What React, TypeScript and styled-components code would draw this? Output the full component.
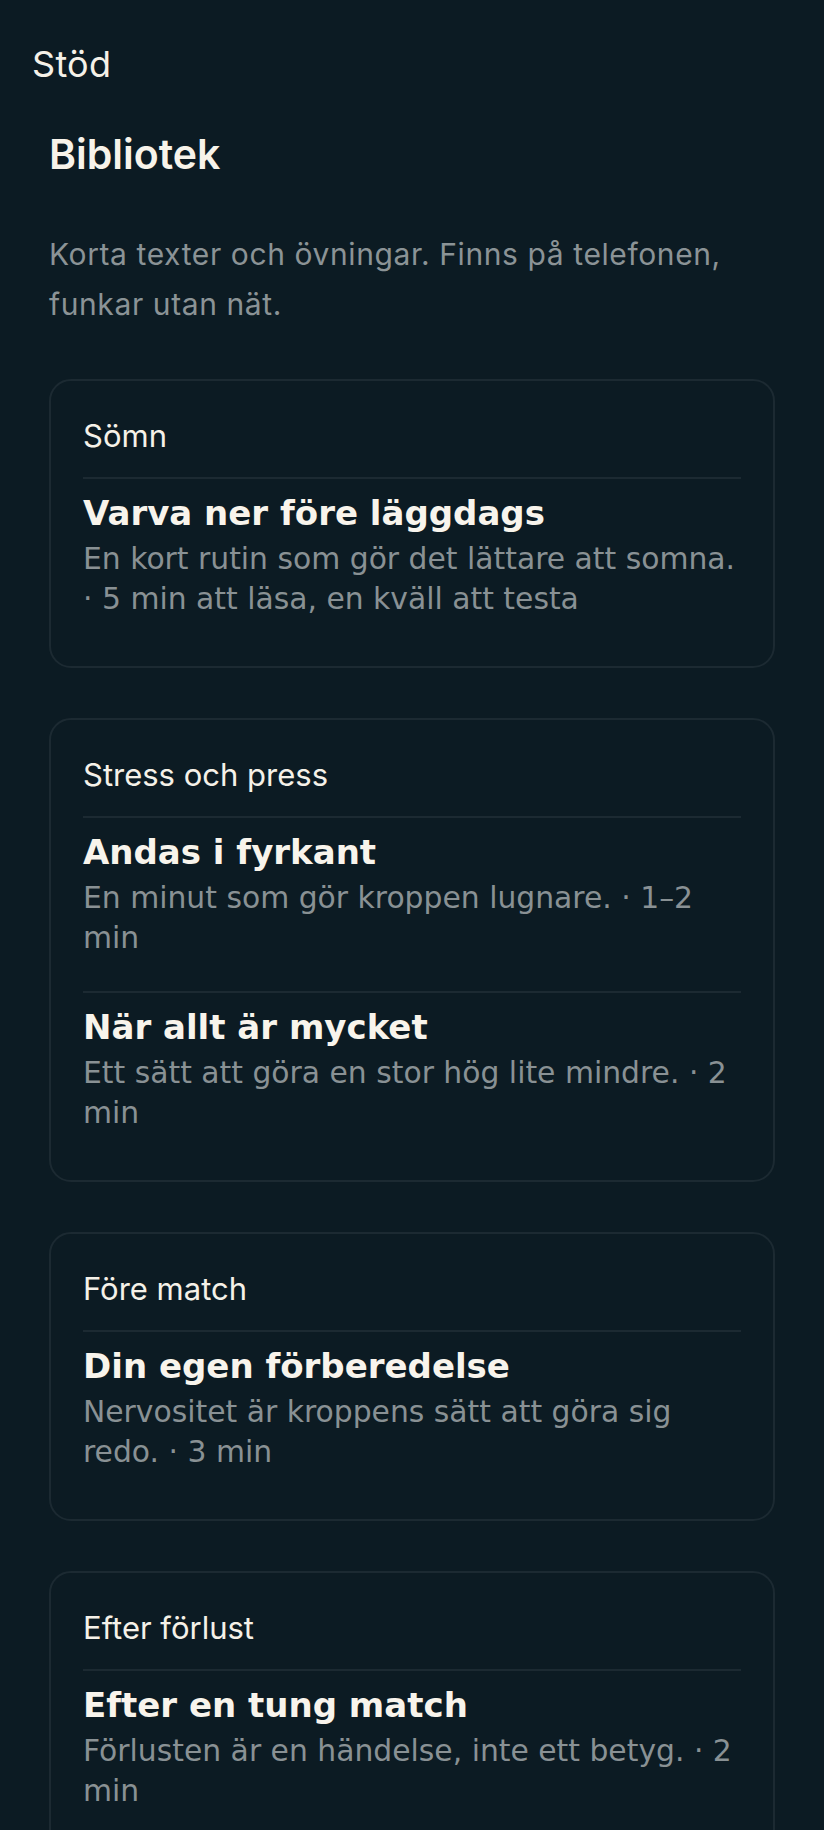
import styled, { createGlobalStyle } from "styled-components";

const GlobalStyle = createGlobalStyle`
  html, body {
    margin: 0;
    padding: 0;
    background-color: #0c1b23;
  }
  * {
    box-sizing: border-box;
  }
`;

const Page = styled.div`
  min-height: 1830px;
  background-color: #0c1b23;
  color: #f5f1e8;
`;

const TopBar = styled.header`
  padding: 43px 32px 0;
  font-family: Inter, Lato, sans-serif;
  font-size: 36px;
  line-height: 1.2;
  font-weight: 400;
  letter-spacing: 0.3px;
  color: #f5f1e8;
`;

const Main = styled.main`
  padding: 44px 49px 0;
  display: flex;
  flex-direction: column;
`;

const Heading = styled.h1`
  margin: 0;
  font-family: Inter, Lato, sans-serif;
  font-size: 41px;
  line-height: 1.2;
  font-weight: 600;
  color: #f7f3ea;
`;

const Intro = styled.p`
  margin: 50px 0 50px;
  font-family: Inter, Lato, sans-serif;
  font-size: 30px;
  line-height: 50px;
  letter-spacing: 0.6px;
  color: #8b9396;
`;

const CardList = styled.div`
  display: flex;
  flex-direction: column;
  gap: 50px;
`;

const Card = styled.section`
  border: 2px solid #1c2a32;
  border-radius: 22px;
  padding: 35px 32px 14px;
  background-color: #0c1b23;
`;

const Category = styled.h2`
  margin: 0 0 21px;
  font-family: Inter, Lato, sans-serif;
  font-size: 31px;
  line-height: 40px;
  font-weight: 400;
  color: #f5f1e8;
`;

const Item = styled.article`
  border-top: 2px solid #1c2a32;
  padding: 13px 0 33px;
`;

const ItemTitle = styled.h3`
  margin: 0 0 4px;
  font-family: "DejaVu Sans", sans-serif;
  font-size: 34px;
  line-height: 43px;
  font-weight: 700;
  color: #f8f4ec;
`;

const ItemMeta = styled.p`
  margin: 0;
  font-family: "DejaVu Sans", sans-serif;
  font-size: 29.8px;
  line-height: 40px;
  color: #899194;
`;

interface Entry {
  title: string;
  summary: string;
  duration: string;
}

interface Section {
  name: string;
  entries: Entry[];
}

const sections: Section[] = [
  {
    name: "Sömn",
    entries: [
      {
        title: "Varva ner före läggdags",
        summary: "En kort rutin som gör det lättare att somna.",
        duration: "5 min att läsa, en kväll att testa",
      },
    ],
  },
  {
    name: "Stress och press",
    entries: [
      {
        title: "Andas i fyrkant",
        summary: "En minut som gör kroppen lugnare.",
        duration: "1–2 min",
      },
      {
        title: "När allt är mycket",
        summary: "Ett sätt att göra en stor hög lite mindre.",
        duration: "2 min",
      },
    ],
  },
  {
    name: "Före match",
    entries: [
      {
        title: "Din egen förberedelse",
        summary: "Nervositet är kroppens sätt att göra sig redo.",
        duration: "3 min",
      },
    ],
  },
  {
    name: "Efter förlust",
    entries: [
      {
        title: "Efter en tung match",
        summary: "Förlusten är en händelse, inte ett betyg.",
        duration: "2 min",
      },
    ],
  },
];

export default function App() {
  return (
    <>
      <GlobalStyle />
      <Page>
        <TopBar>Stöd</TopBar>
        <Main>
          <Heading>Bibliotek</Heading>
          <Intro>
            Korta texter och övningar. Finns på telefonen, funkar utan nät.
          </Intro>
          <CardList>
            {sections.map((section) => (
              <Card key={section.name}>
                <Category>{section.name}</Category>
                {section.entries.map((entry) => (
                  <Item key={entry.title}>
                    <ItemTitle>{entry.title}</ItemTitle>
                    <ItemMeta>
                      {entry.summary} · {entry.duration}
                    </ItemMeta>
                  </Item>
                ))}
              </Card>
            ))}
          </CardList>
        </Main>
      </Page>
    </>
  );
}
